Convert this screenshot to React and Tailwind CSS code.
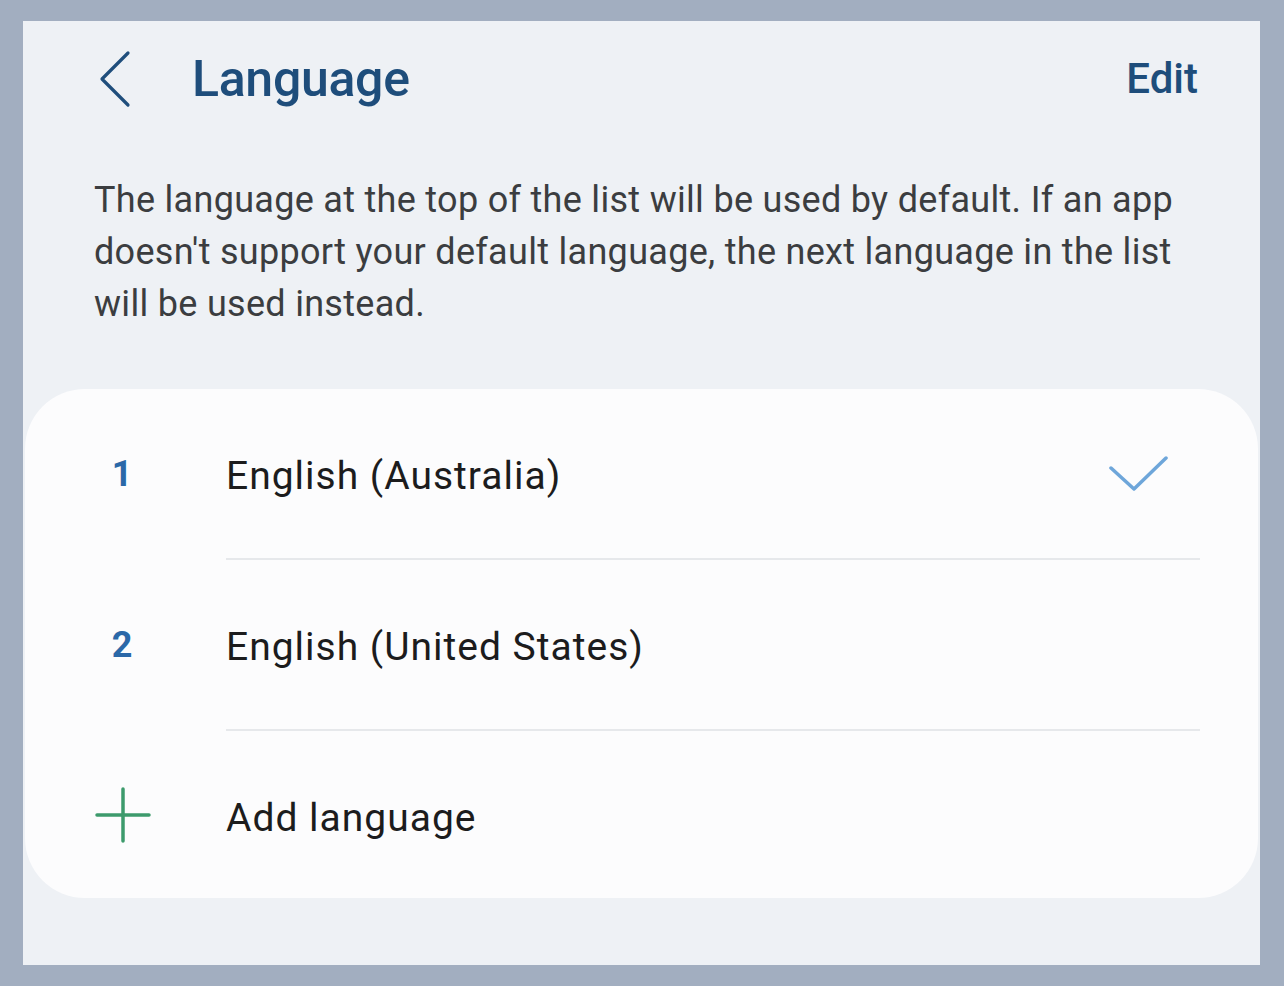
import { useState } from 'react'

const LANGS = [
  { n: '1', label: 'English (Australia)', active: true },
  { n: '2', label: 'English (United States)' },
]

function Divider() {
  return <div className="ml-[201px] mr-[58px] h-[2px] bg-[#e6e8eb]" />
}

export default function App() {
  const [selected] = useState(0)

  return (
    <div className="w-[1284px] h-[986px] bg-[#a2aec0] pt-[21px] pl-[23px] pr-[24px] pb-[21px] font-['Roboto',sans-serif]">
      <div className="h-full bg-[#eef1f5] flex flex-col">
        {/* Header */}
        <header className="h-[116px] flex items-center pl-[75px] pr-[62px]">
          <svg width="34" height="58" viewBox="0 0 34 58" fill="none" className="shrink-0">
            <path d="M30 3 L4 29 L30 55" stroke="#1f4e7c" strokeWidth="3.2" strokeLinecap="round" strokeLinejoin="round" />
          </svg>
          <h1 className="ml-[60px] text-[50px] leading-none font-medium text-[#1e4d7b] tracking-[-0.3px]">Language</h1>
          <button className="ml-auto text-[42px] leading-none font-medium text-[#1e4d7b]">Edit</button>
        </header>

        {/* Description */}
        <p className="mt-[37px] pl-[71px] pr-[70px] text-[36px] leading-[52px] tracking-[0.3px] text-[#3b3d40]">
          The language at the top of the list will be used by default. If an app doesn't support your default language, the next language in the list will be used instead.
        </p>

        {/* List card */}
        <div className="mt-[59px] mx-[2px] bg-[#fcfcfd] rounded-[60px]">
          {LANGS.map((l, i) => (
            <div key={l.n}>
              <div className="h-[169px] flex items-center pl-[70px] pr-[90px]">
                <div className="w-[131px] shrink-0">
                  <div className="w-[54px] text-center text-[36px] font-bold text-[#2b68a8]">{l.n}</div>
                </div>
                <span className="pt-[6px] text-[39px] tracking-[1px] text-[#1c1c1d]">{l.label}</span>
                {i === selected && (
                  <svg width="60" height="40" viewBox="0 0 60 40" fill="none" className="ml-auto">
                    <path d="M3 14 L26 35 L58 4" stroke="#6ea6da" strokeWidth="3.5" strokeLinecap="round" strokeLinejoin="round" />
                  </svg>
                )}
              </div>
              <Divider />
            </div>
          ))}
          <div className="h-[167px] flex items-center pl-[70px]">
            <div className="w-[131px] shrink-0">
              <svg width="56" height="56" viewBox="0 0 56 56" fill="none">
                <path d="M28 2 V54 M2 28 H54" stroke="#3d9a6c" strokeWidth="3.5" strokeLinecap="round" />
              </svg>
            </div>
            <span className="pt-[8px] text-[39px] tracking-[1px] text-[#1c1c1d]">Add language</span>
          </div>
        </div>
      </div>
    </div>
  )
}
